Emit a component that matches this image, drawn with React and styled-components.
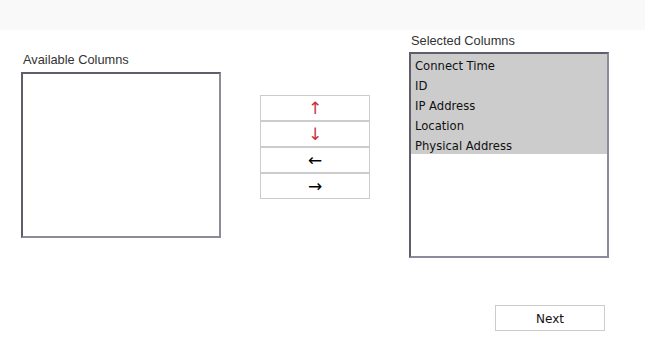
import styled, { createGlobalStyle } from "styled-components";

const Global = createGlobalStyle`
  body {
    margin: 0;
    background: #ffffff;
    font-family: "Liberation Sans", Arial, sans-serif;
  }
`;

const TopBar = styled.div`
  height: 30px;
  background: #f9f9f9;
`;

const Main = styled.div`
  display: flex;
  align-items: flex-start;
  gap: 39px;
  padding-left: 21px;
`;

const Column = styled.div`
  display: flex;
  flex-direction: column;
  margin-top: ${(p) => p.$top}px;
`;

const Label = styled.div`
  font-size: 12.8px;
  line-height: 14px;
  color: #333;
  padding-left: 2px;
  margin-bottom: ${(p) => p.$gap}px;
`;

const ListBox = styled.div`
  box-sizing: border-box;
  width: 200px;
  height: ${(p) => p.$height}px;
  border: 2px solid;
  border-color: #5f5e6a #8d8b99 #8d8b99 #5f5e6a;
  background: #fff;
  overflow: hidden;
`;

const Item = styled.div`
  box-sizing: border-box;
  height: 20px;
  padding: 4px 0 0 4px;
  line-height: 16px;
  background: #cccccc;
  color: #111;
  font-family: "DejaVu Sans", Tahoma, sans-serif;
  font-size: 11.6px;
`;

const ButtonStack = styled.div`
  display: flex;
  flex-direction: column;
  margin-top: 65px;
`;

const MoveButton = styled.button`
  box-sizing: border-box;
  width: 110px;
  height: 26px;
  margin: 0;
  padding: 0;
  border: 1px solid #cccccc;
  background: #fff;
  font-family: "DejaVu Sans", sans-serif;
  font-size: 17px;
  line-height: 24px;
  color: ${(p) => (p.$red ? "#c8323a" : "#000")};
`;

const Footer = styled.div`
  display: flex;
  justify-content: flex-end;
  padding-right: 40px;
  margin-top: 47px;
`;

const NextButton = styled.button`
  box-sizing: border-box;
  width: 110px;
  height: 26px;
  padding: 2px 0 0;
  border: 1px solid #cccccc;
  background: #fff;
  font-family: "DejaVu Sans", Tahoma, sans-serif;
  font-size: 12px;
  color: #111;
`;

const selected = ["Connect Time", "ID", "IP Address", "Location", "Physical Address"];

export default function App() {
  return (
    <>
      <Global />
      <TopBar />
      <Main>
        <Column $top={23}>
          <Label $gap={5}>Available Columns</Label>
          <ListBox $height={166} />
        </Column>
        <ButtonStack>
          <MoveButton $red>↑</MoveButton>
          <MoveButton $red>↓</MoveButton>
          <MoveButton>←</MoveButton>
          <MoveButton>→</MoveButton>
        </ButtonStack>
        <Column $top={4}>
          <Label $gap={4}>Selected Columns</Label>
          <ListBox $height={206}>
            {selected.map((s) => (
              <Item key={s}>{s}</Item>
            ))}
          </ListBox>
        </Column>
      </Main>
      <Footer>
        <NextButton>Next</NextButton>
      </Footer>
    </>
  );
}
